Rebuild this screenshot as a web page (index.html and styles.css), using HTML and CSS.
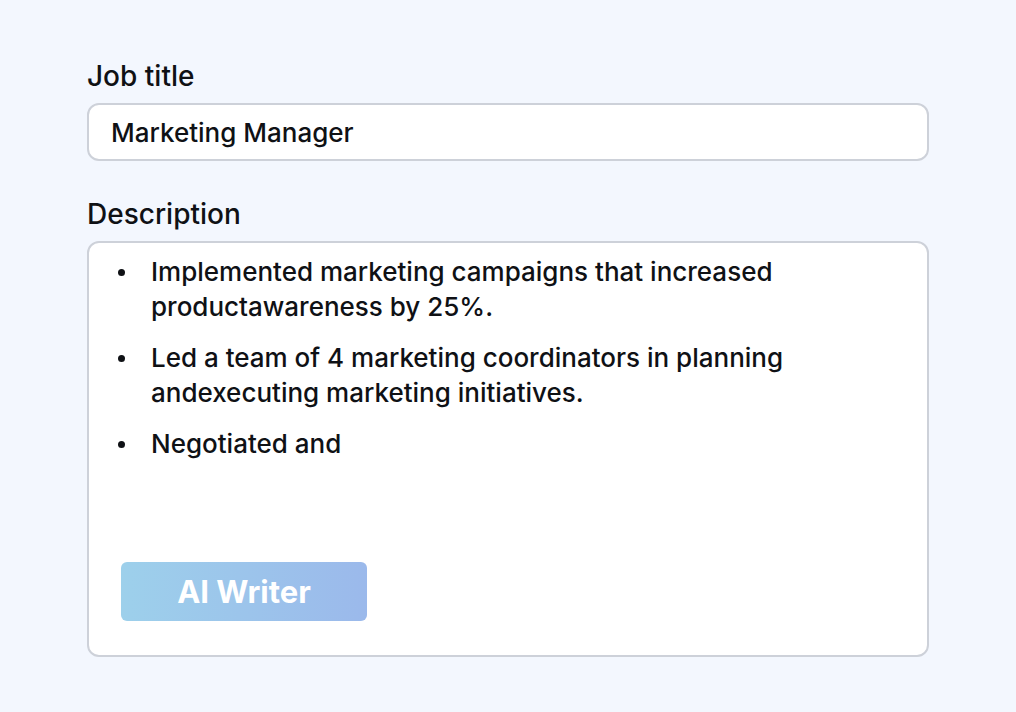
FILE: index.html
```html
<!DOCTYPE html>
<html>
<head>
<meta charset="utf-8">
<link rel="stylesheet" href="styles.css">
</head>
<body>
<div class="form">
  <div class="field">
    <label class="label">Job title</label>
    <div class="input">Marketing Manager</div>
  </div>
  <div class="field">
    <label class="label">Description</label>
    <div class="textarea">
      <ul class="list">
        <li>Implemented marketing campaigns that increased productawareness by 25%.</li>
        <li>Led a team of 4 marketing coordinators in planning andexecuting marketing initiatives.</li>
        <li>Negotiated and</li>
      </ul>
      <button class="ai-btn">AI Writer</button>
    </div>
  </div>
</div>
</body>
</html>
```
FILE: styles.css
```css
* { box-sizing: border-box; }
html, body { margin: 0; padding: 0; }
body {
  background: #f3f7fe;
  font-family: Inter, "Noto Sans", sans-serif;
  color: #0f1115;
  width: 1016px;
  height: 712px;
  overflow: hidden;
}
.form {
  padding: 59px 87px 0 87px;
  display: flex;
  flex-direction: column;
  gap: 36px;
}
.field {
  display: flex;
  flex-direction: column;
  gap: 10px;
  flex-shrink: 0;
}
.label {
  font-size: 28px;
  font-weight: 500;
  line-height: 34px;
}
.input {
  flex-shrink: 0;
  width: 842px;
  height: 58px;
  background: #fff;
  border: 2px solid #cdd1d9;
  border-radius: 12px;
  padding: 0 22px;
  display: flex;
  align-items: center;
  font-size: 26px;
  font-weight: 500;
}
.textarea {
  flex-shrink: 0;
  width: 842px;
  height: 416px;
  background: #fff;
  border: 2px solid #cdd1d9;
  border-radius: 12px;
  display: flex;
  flex-direction: column;
  padding: 11px 0 34px 0;
}
.list {
  list-style: none;
  margin: 0;
  padding: 0 120px 0 0;
  display: flex;
  flex-direction: column;
  gap: 16px;
}
.list li {
  display: flex;
  font-size: 26px;
  font-weight: 500;
  line-height: 35px;
}
.list li::before {
  content: "";
  flex-shrink: 0;
  width: 7px;
  height: 7px;
  border-radius: 50%;
  background: #0f1115;
  margin: 15px 26px 0 29px;
}
.ai-btn {
  flex-shrink: 0;
  margin-top: auto;
  margin-left: 32px;
  width: 246px;
  height: 59px;
  border: none;
  border-radius: 6px;
  background: linear-gradient(90deg, #9dd0eb, #9bb9eb);
  color: #fff;
  font-family: Inter, "Noto Sans", sans-serif;
  font-size: 31px;
  font-weight: 700;
  padding: 0;
}
```
